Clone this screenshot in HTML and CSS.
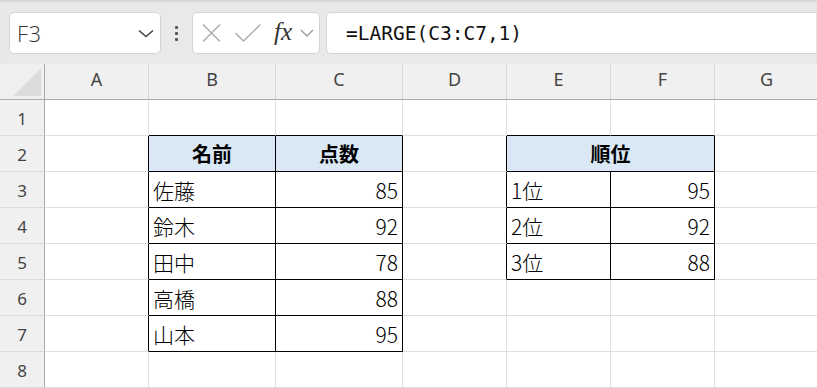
FILE: index.html
```html
<!DOCTYPE html>
<html lang="ja">
<head>
<meta charset="utf-8">
<link rel="stylesheet" href="styles.css">
</head>
<body>
<div class="app">
  <div class="toolbar">
    <div class="namebox">
      <span class="name">F3</span>
      <svg class="chev" width="16" height="9" viewBox="0 0 16 9"><path d="M1 1.5 L8 7.5 L15 1.5" fill="none" stroke="#444" stroke-width="1.6"/></svg>
    </div>
    <div class="dots"><i></i><i></i><i></i></div>
    <div class="fxbox">
      <svg class="ico-x" width="19" height="18" viewBox="0 0 19 18"><path d="M1 0.5 L18 17.5 M18 0.5 L1 17.5" stroke="#aaa" stroke-width="1.4" fill="none"/></svg>
      <svg class="ico-check" width="26" height="18" viewBox="0 0 26 18"><path d="M0.5 9 L8.5 17 L25.5 0.5" stroke="#aaa" stroke-width="1.4" fill="none"/></svg>
      <span class="fx">fx</span>
      <svg class="chev-s" width="14" height="8" viewBox="0 0 14 8"><path d="M1 1 L7 7 L13 1" fill="none" stroke="#999" stroke-width="1.3"/></svg>
    </div>
    <div class="formula">=LARGE(C3:C7,1)</div>
  </div>
  <div class="sheet">
    <div class="ch corner"><svg width="28" height="28" viewBox="0 0 28 28"><polygon points="28,0 28,28 0,28" fill="#dcdcdc"/></svg></div>
    <div class="ch">A</div><div class="ch">B</div><div class="ch">C</div><div class="ch">D</div><div class="ch">E</div><div class="ch">F</div><div class="ch">G</div>

    <div class="rh">1</div>
    <div class="c"></div><div class="c bB"></div><div class="c bB"></div><div class="c"></div><div class="c bB"></div><div class="c bB"></div><div class="c"></div>

    <div class="rh">2</div>
    <div class="c bR"></div><div class="c bR bB hd">名前</div><div class="c bR bB hd">点数</div><div class="c bR"></div><div class="c bR bB hd span2">順位</div><div class="c"></div>

    <div class="rh">3</div>
    <div class="c bR"></div><div class="c bR bB tx">佐藤</div><div class="c bR bB num">85</div><div class="c bR"></div><div class="c bR bB tx">1位</div><div class="c bR bB num">95</div><div class="c"></div>

    <div class="rh">4</div>
    <div class="c bR"></div><div class="c bR bB tx">鈴木</div><div class="c bR bB num">92</div><div class="c bR"></div><div class="c bR bB tx">2位</div><div class="c bR bB num">92</div><div class="c"></div>

    <div class="rh">5</div>
    <div class="c bR"></div><div class="c bR bB tx">田中</div><div class="c bR bB num">78</div><div class="c bR"></div><div class="c bR bB tx">3位</div><div class="c bR bB num">88</div><div class="c"></div>

    <div class="rh">6</div>
    <div class="c bR"></div><div class="c bR bB tx">高橋</div><div class="c bR bB num">88</div><div class="c"></div><div class="c"></div><div class="c"></div><div class="c"></div>

    <div class="rh">7</div>
    <div class="c bR"></div><div class="c bR bB tx">山本</div><div class="c bR bB num">95</div><div class="c"></div><div class="c"></div><div class="c"></div><div class="c"></div>

    <div class="rh">8</div>
    <div class="c"></div><div class="c"></div><div class="c"></div><div class="c"></div><div class="c"></div><div class="c"></div><div class="c"></div>
  </div>
</div>
</body>
</html>
```

FILE: styles.css
```css
* { box-sizing: border-box; }
html, body { margin: 0; padding: 0; }
body {
  width: 817px;
  height: 388px;
  overflow: hidden;
  background: #ffffff;
  font-family: "Noto Sans", "Open Sans", sans-serif;
}
.app { width: 817px; height: 388px; overflow: hidden; }

.toolbar {
  height: 64px;
  background: #e9e9ea;
  box-shadow: inset 0 3px 3px -2px #c9c9cb;
  display: flex;
  align-items: flex-start;
  padding: 12px 0 0 9px;
}
.namebox, .fxbox, .formula {
  height: 42px;
  background: #ffffff;
  border: 1px solid #d4d4d6;
  border-radius: 5px;
}
.namebox {
  width: 152px;
  display: flex;
  align-items: center;
  justify-content: space-between;
  padding: 0 6px 0 7px;
}
.name {
  font-family: "Open Sans", "Noto Sans", sans-serif;
  font-size: 22px;
  color: #333;
  font-weight: 300;
  letter-spacing: 0.5px;
}
.chev { margin-top: 1px; }

.dots {
  width: 31px;
  height: 42px;
  display: flex;
  flex-direction: column;
  align-items: center;
  justify-content: center;
  gap: 3px;
}
.dots i {
  display: block;
  width: 3px;
  height: 3px;
  border-radius: 1px;
  background: #555;
}

.fxbox {
  width: 128px;
  display: flex;
  align-items: center;
  padding: 0 0 0 9px;
}
.ico-x { margin-top: -1px; }
.ico-check { margin-left: 14px; margin-top: 0px; }
.fx {
  margin-left: 13px;
  font-family: "Liberation Serif", "DejaVu Serif", serif;
  font-style: italic;
  font-size: 25px;
  color: #333;
  line-height: 1;
  margin-top: -3px;
}
.chev-s { margin-left: 8px; margin-top: 0px; }

.formula {
  width: 490px;
  margin-left: 6px;
  padding-left: 19px;
  display: flex;
  align-items: center;
  font-family: "DejaVu Sans Mono", "Liberation Mono", monospace;
  font-size: 19.5px;
  color: #111;
  border-right: none;
  border-radius: 5px 0 0 5px;
}

.sheet {
  display: grid;
  grid-template-columns: 45px 104px 127px 127px 104px 104px 104px 104px;
  grid-template-rows: 36px repeat(8, 36px);
  width: 819px;
}
.ch {
  background: #f0f0f0;
  border-right: 1px solid #d9d9d9;
  border-bottom: 1px solid #ababab;
  display: flex;
  justify-content: center;
  align-items: flex-start;
  padding-top: 3px;
  font-size: 18px;
  color: #444;
}
.corner {
  border-right: 1px solid #ababab;
  display: flex;
  align-items: flex-start;
  justify-content: flex-start;
  padding: 4px 0 0 13px;
}
.rh {
  background: #f0f0f0;
  border-right: 1px solid #ababab;
  border-bottom: 1px solid #dcdcdc;
  display: flex;
  justify-content: center;
  align-items: center;
  padding-top: 1px;
  font-size: 17px;
  color: #444;
}
.c {
  border-right: 1px solid #e0e0e0;
  border-bottom: 1px solid #e0e0e0;
  display: flex;
  align-items: center;
  font-family: "Noto Sans CJK JP", "Noto Sans", sans-serif;
  font-size: 21px;
  font-weight: 300;
  color: #000;
  line-height: 1;
}
.c.bR { border-right-color: #000; }
.c.bB { border-bottom-color: #000; }
.hd {
  background: #dae8f6;
  justify-content: center;
  font-weight: 700;
  font-size: 20px;
}
.span2 { grid-column: span 2; }
.tx { padding-left: 4px; padding-top: 1px; }
.num { justify-content: flex-end; padding-right: 4px; padding-top: 1px; }
```
